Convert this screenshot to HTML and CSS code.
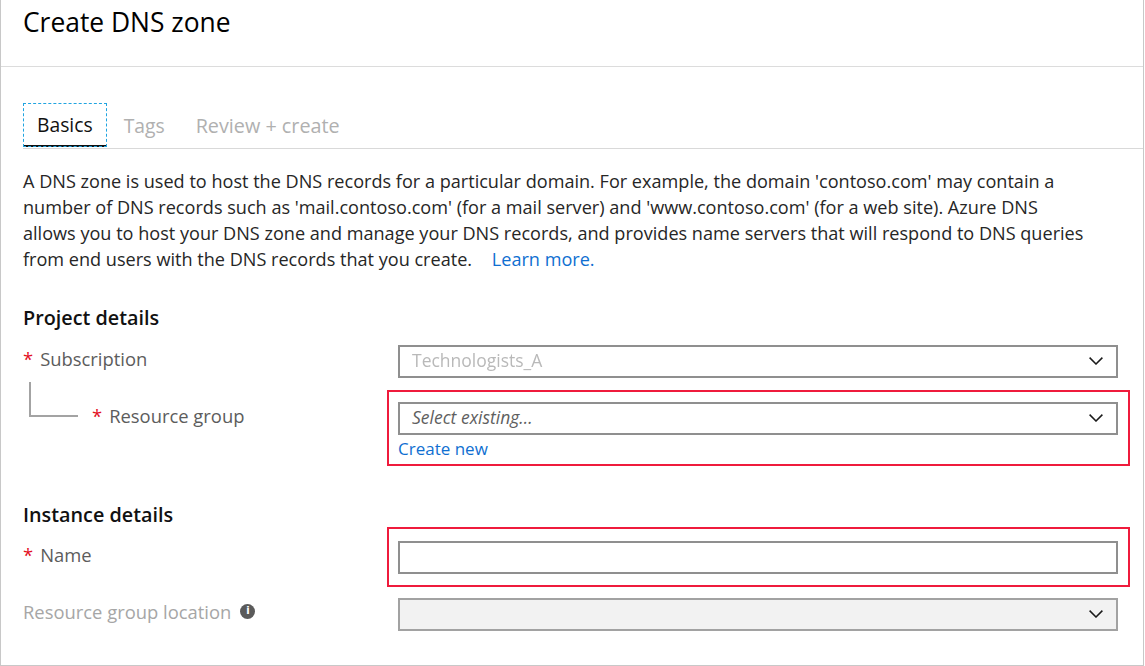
FILE: index.html
```html
<!DOCTYPE html>
<html lang="en">
<head>
<meta charset="utf-8">
<title>Create DNS zone</title>
<link rel="stylesheet" href="styles.css">
</head>
<body>
<div class="panel">
  <header class="header">
    <h1 class="title">Create DNS zone</h1>
  </header>
  <div class="content">
    <nav class="tabs">
      <div class="tab tab-active">Basics</div>
      <div class="tab">Tags</div>
      <div class="tab tab-review">Review + create</div>
    </nav>
    <p class="desc">A DNS zone is used to host the DNS records for a particular domain. For example, the domain 'contoso.com' may contain a<br>number of DNS records such as 'mail.contoso.com' (for a mail server) and 'www.contoso.com' (for a web site). Azure DNS<br>allows you to host your DNS zone and manage your DNS records, and provides name servers that will respond to DNS queries<br>from end users with the DNS records that you create. <a class="link learn" href="#">Learn more.</a></p>

    <h2 class="section">Project details</h2>
    <div class="row row-sub">
      <div class="label"><span class="req">*</span> Subscription</div>
      <div class="select"><span class="value blurred">Technologists_A</span><svg class="chev" width="14" height="8" viewBox="0 0 14 8"><path d="M0.6 0.6 L7 7 L13.4 0.6" fill="none" stroke="#1a1a1a" stroke-width="1.5"/></svg></div>
    </div>
    <div class="row row-rg">
      <div class="label label-rg"><span class="tree"></span><span class="req">*</span> Resource group</div>
      <div class="highlight highlight-rg">
        <div class="select"><span class="value placeholder">Select existing...</span><svg class="chev" width="14" height="8" viewBox="0 0 14 8"><path d="M0.6 0.6 L7 7 L13.4 0.6" fill="none" stroke="#1a1a1a" stroke-width="1.5"/></svg></div>
        <a class="link create" href="#">Create new</a>
      </div>
    </div>

    <h2 class="section section-inst">Instance details</h2>
    <div class="row row-name">
      <div class="label"><span class="req">*</span> Name</div>
      <div class="highlight highlight-name">
        <div class="input"></div>
      </div>
    </div>
    <div class="row row-loc">
      <div class="label label-disabled">Resource group location <span class="info">i</span></div>
      <div class="select select-disabled"><span class="value"></span><svg class="chev" width="14" height="8" viewBox="0 0 14 8"><path d="M0.6 0.6 L7 7 L13.4 0.6" fill="none" stroke="#1a1a1a" stroke-width="1.5"/></svg></div>
    </div>
  </div>
</div>
</body>
</html>
```

FILE: styles.css
```css
* { box-sizing: border-box; }
html, body { margin: 0; padding: 0; background: #fff; }
body { font-family: "Open Sans", "Noto Sans", sans-serif; color: #262626; }

.panel {
  width: 1144px;
  height: 666px;
  border-left: 1px solid #c8c8c8;
  border-right: 1px solid #c8c8c8;
  border-bottom: 1px solid #c8c8c8;
  overflow: hidden;
}

.header {
  height: 67px;
  border-bottom: 1px solid #dcdcdc;
  padding: 5px 0 0 22px;
}
.title {
  margin: 0;
  font-size: 26.4px;
  font-weight: 400;
  line-height: 34px;
  color: #000;
}

.content { padding: 36px 0 0 22px; }

.tabs {
  display: flex;
  gap: 3px;
  border-bottom: 1px solid #d9d9d9;
  height: 46px;
}
.tab {
  height: 44px;
  padding: 2px 14px 0;
  font-size: 19.3px;
  line-height: 42px;
  color: #b0b0b0;
}
.tab-review { font-size: 19.8px; }
.tab-active {
  color: #111;
  outline: 1px dashed #20a4e0;
  outline-offset: -1px;
  border-bottom: 2px solid #111;
  line-height: 40px;
}

.desc {
  margin: 20px 0 0 0;
  font-size: 18.1px;
  line-height: 25.9px;
  color: #262626;
  white-space: nowrap;
}
.link { color: #0f6fd1; text-decoration: none; }
.learn { margin-left: 15px; }

.section {
  margin: 32px 0 0 0;
  font-size: 19.8px;
  font-weight: 600;
  line-height: 26px;
  color: #111;
}
.section-inst { margin-top: 41px; }

.row {
  display: grid;
  grid-template-columns: 375px 720px;
  align-items: start;
}
.row-sub { margin-top: 14px; }
.row-rg { margin-top: 24px; }
.row-name { margin-top: 13px; }
.row-loc { margin-top: 24px; }

.label {
  font-size: 18.4px;
  line-height: 27px;
  color: #5c5c5c;
  display: flex;
  align-items: center;
}
.req { color: #e3101f; margin-right: 7px; }
.label-rg { padding-left: 6px; }
.tree {
  flex: none;
  align-self: flex-start;
  width: 49px;
  height: 35px;
  margin-top: -20px;
  margin-right: 14px;
  border-left: 2px solid #a3a3a3;
  border-bottom: 2px solid #a3a3a3;
}
.label-disabled { color: #a6a6a6; }
.info {
  display: inline-flex;
  align-items: center;
  justify-content: center;
  width: 15px;
  height: 15px;
  border-radius: 50%;
  background: #5a5a5a;
  color: #fff;
  font-size: 10px;
  line-height: 1;
  font-weight: 700;
  font-family: "DejaVu Sans", sans-serif;
  margin-left: 9px;
}

.select, .input {
  height: 33px;
  border: 2px solid #8f8f8f;
  display: flex;
  align-items: center;
  justify-content: space-between;
  padding: 0 13px 0 12px;
  background: #fff;
}
.select-disabled { background: #f2f2f2; border-color: #a2a2a2; }
.value { font-size: 17.5px; line-height: 1; }
.blurred { color: #b9b9b9; filter: blur(0.7px); }
.placeholder { color: #5f5f5f; font-style: italic; }
.chev { flex: none; }

.highlight {
  border: 2px solid #ef1b3c;
  margin: -12px -12px -5px -11px;
  padding: 10px 10px 3px 9px;
}
.highlight-name {
  margin: -14px -12px -13px -11px;
  padding: 12px 10px 11px 9px;
}
.create {
  display: block;
  font-size: 17px;
  line-height: 24px;
  margin-top: 2px;
}
```
